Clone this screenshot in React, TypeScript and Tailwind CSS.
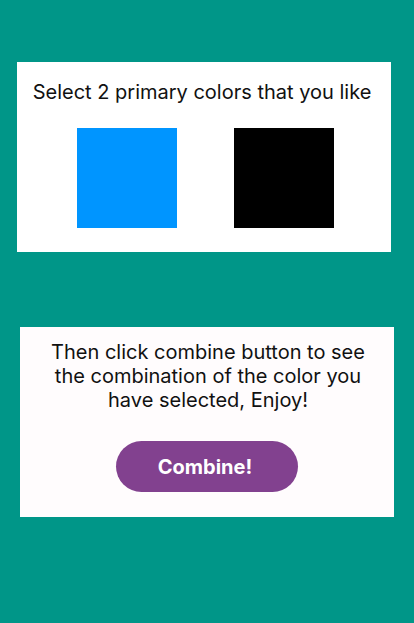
const colors = ['bg-[#0095ff]', 'bg-black'];

export default function App() {
  return (
    <div className="min-h-[623px] bg-[#009688] pt-[62px] pb-[106px] font-['Inter',sans-serif]">
      <div className="ml-[17px] w-[374px] h-[190px] bg-white pt-[18px] flex flex-col items-center">
        <p className="mr-[4px] text-[20px] leading-[24px] text-[#111]">Select 2 primary colors that you like</p>
        <div className="mt-[24px] ml-[2px] flex gap-[57px]">
          {colors.map((c) => (
            <button key={c} className={`w-[100px] h-[100px] ${c}`} />
          ))}
        </div>
      </div>

      <div className="mt-[75px] ml-[20px] w-[374px] h-[190px] bg-[#fffcfd] pt-[13px] flex flex-col items-center">
        <p className="ml-[2px] w-[324px] text-center text-[20px] leading-[24px] text-[#111]">
          Then click combine button to see the combination of the color you have selected, Enjoy!
        </p>
        <button className="mt-[29px] w-[182px] h-[51px] pr-[4px] rounded-full bg-[#82418f] text-white text-[20px] font-bold">
          Combine!
        </button>
      </div>
    </div>
  );
}
